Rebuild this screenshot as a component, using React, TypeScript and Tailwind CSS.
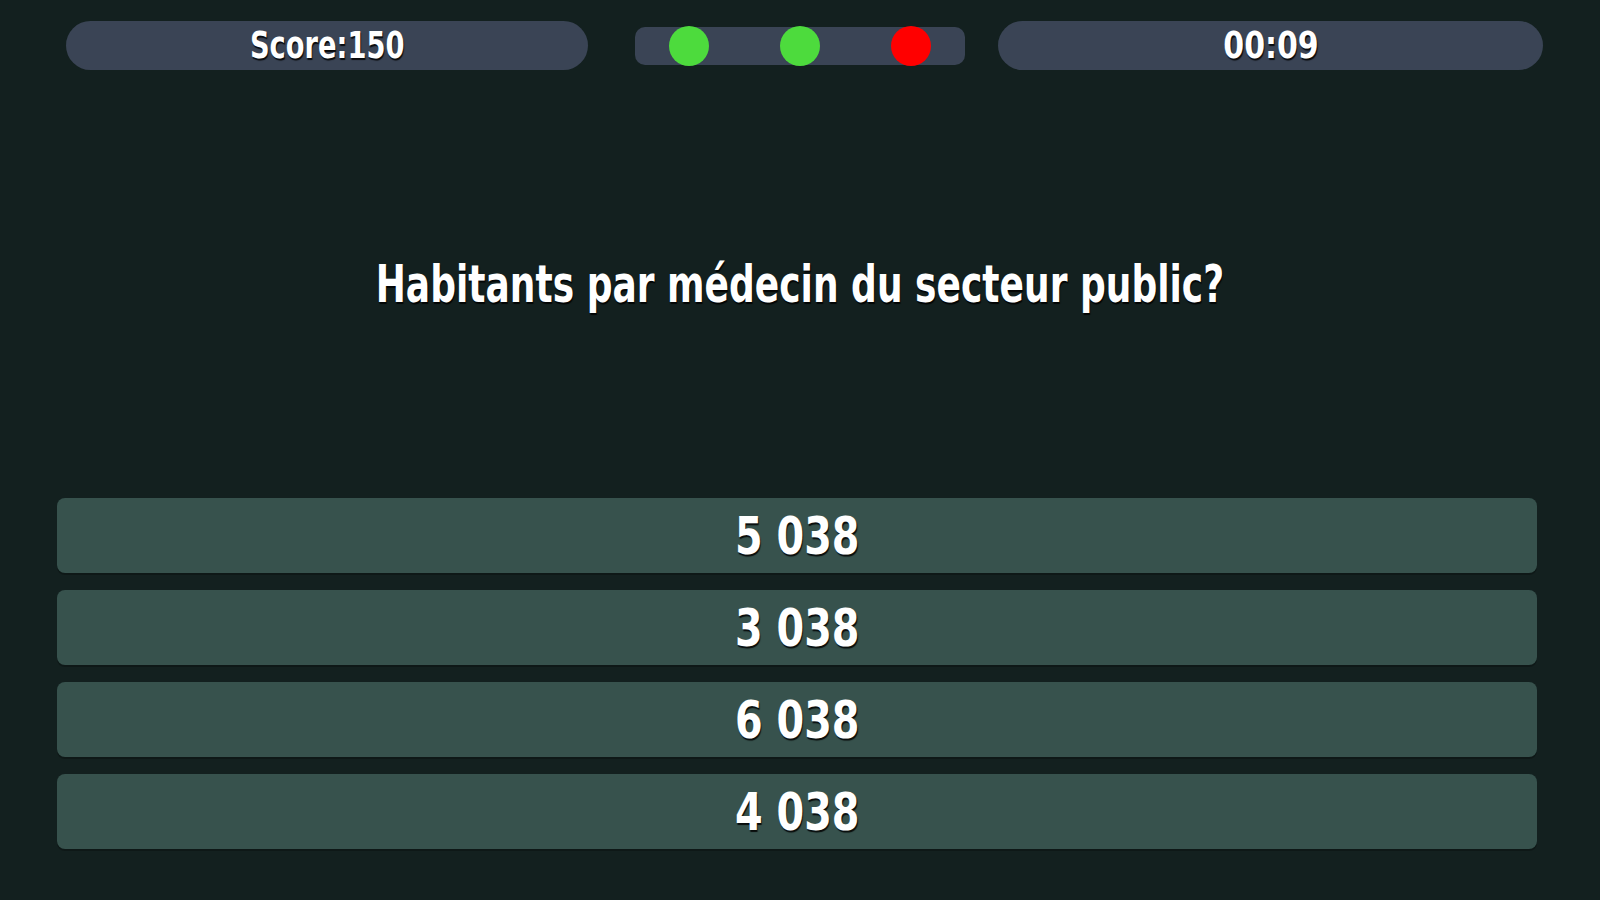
const FONT =
  "font-['DejaVu_Sans_Condensed','DejaVu_Sans',sans-serif] font-bold [font-stretch:condensed]";
const SHADOW = "[text-shadow:1px_2px_1px_rgba(0,0,0,0.85)]";

const ANSWERS = ["5 038", "3 038", "6 038", "4 038"];
const LIVES: ("ok" | "miss")[] = ["ok", "ok", "miss"];

export default function App() {
  return (
    <div className={`flex h-screen w-full flex-col bg-[#13201f] text-white ${FONT}`}>
      {/* Top bar */}
      <div className="flex items-center pl-[66px] pr-[57px] pt-[21px]">
        <div className="flex h-[49px] w-[522px] items-center justify-center rounded-full bg-[#3a4455]">
          <span className={`inline-block scale-x-[0.82] text-[37px] leading-none ${SHADOW}`}>
            Score:150
          </span>
        </div>

        <div className="ml-[47px] flex h-[38px] w-[330px] items-center justify-center gap-[71px] rounded-[10px] bg-[#3a4455]">
          {LIVES.map((l, i) => (
            <span
              key={i}
              className={[
                "h-[40px] w-[40px] rounded-full",
                l === "ok" ? "bg-[#4ddb3d]" : "bg-[#ff0000]",
              ].join(" ")}
            />
          ))}
        </div>

        <div className="ml-[33px] flex h-[49px] flex-1 items-center justify-center rounded-full bg-[#3a4455]">
          <span className={`inline-block scale-x-[0.9] text-[37px] leading-none ${SHADOW}`}>
            00:09
          </span>
        </div>
      </div>

      {/* Question */}
      <div className="flex flex-1 items-center justify-center">
        <h1 className={`inline-block scale-x-[0.77] whitespace-nowrap text-[52px] leading-none ${SHADOW}`}>
          Habitants par médecin du secteur public?
        </h1>
      </div>

      {/* Answers */}
      <div className="flex flex-col gap-[17px] pb-[51px] pl-[57px] pr-[63px]">
        {ANSWERS.map((a) => (
          <button
            key={a}
            type="button"
            className="flex h-[75px] items-center justify-center rounded-[8px] bg-[#37524d] shadow-[0_2px_0_rgba(0,0,0,0.25)]"
          >
            <span className={`inline-block scale-x-[0.85] text-[52px] leading-none ${SHADOW}`}>{a}</span>
          </button>
        ))}
      </div>
    </div>
  );
}
